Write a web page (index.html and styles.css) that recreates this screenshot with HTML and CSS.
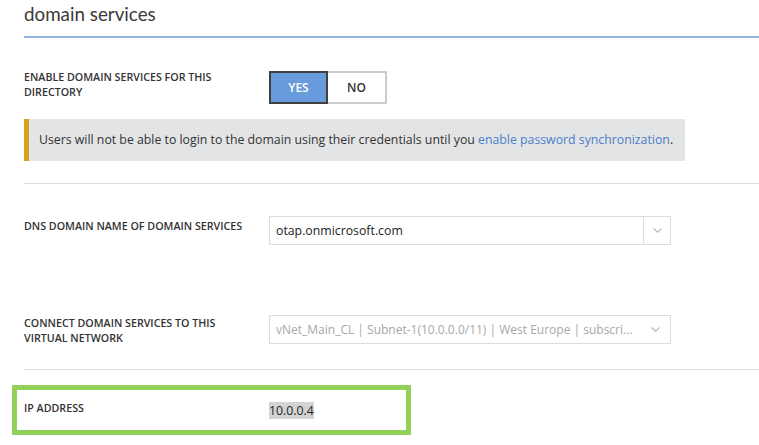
FILE: index.html
```html
<!DOCTYPE html>
<html lang="en">
<head>
<meta charset="utf-8">
<title>domain services</title>
<link rel="stylesheet" href="styles.css">
</head>
<body>
<div class="page">
  <h1 class="title">domain services</h1>
  <div class="rule"></div>

  <div class="row row-toggle">
    <div class="label">ENABLE DOMAIN SERVICES FOR THIS<br>DIRECTORY</div>
    <div class="toggle">
      <span class="opt opt-on">YES</span>
      <span class="opt opt-off">NO</span>
    </div>
  </div>

  <div class="warning">Users will not be able to login to the domain using their credentials until you <a class="link" href="#">enable password synchronization</a>.</div>

  <div class="divider divider-1"></div>

  <div class="row row-dns">
    <div class="label">DNS DOMAIN NAME OF DOMAIN SERVICES</div>
    <div class="combo">
      <span class="combo-text">otap.onmicrosoft.com</span>
      <span class="combo-btn">
        <svg width="9" height="5" viewBox="0 0 9 5"><polyline points="0.5,0.5 4.5,4.2 8.5,0.5" fill="none" stroke="#b8b8b8" stroke-width="1.1"/></svg>
      </span>
    </div>
  </div>

  <div class="row row-vnet">
    <div class="label">CONNECT DOMAIN SERVICES TO THIS<br>VIRTUAL NETWORK</div>
    <div class="select">
      <span class="select-text">vNet_Main_CL | Subnet-1(10.0.0.0/11) | West Europe | subscri...</span>
      <svg class="select-chev" width="9" height="5" viewBox="0 0 9 5"><polyline points="0.5,0.5 4.5,4.2 8.5,0.5" fill="none" stroke="#b8b8b8" stroke-width="1.1"/></svg>
    </div>
  </div>

  <div class="divider divider-2"></div>

  <div class="row row-ip">
    <div class="label">IP ADDRESS</div>
    <div class="ip-value"><span class="hl">10.0.0.4</span></div>
    <div class="callout"></div>
  </div>
</div>
</body>
</html>
```

FILE: styles.css
```css
html, body {
  margin: 0;
  padding: 0;
  background: #ffffff;
}

body {
  font-family: "Open Sans", "Noto Sans", sans-serif;
  color: #333333;
  width: 759px;
  height: 445px;
  overflow: hidden;
}

.page {
  padding-left: 24px;
}

.title {
  margin: 0;
  height: 36px;
  box-sizing: border-box;
  padding-top: 2px;
  font-family: "Lato", "Open Sans", sans-serif;
  font-size: 18.8px;
  line-height: 24px;
  font-weight: 400;
  color: #3a3a3a;
}

.rule {
  height: 2px;
  background: #93b5e1;
}

.row {
  display: flex;
  align-items: flex-start;
}

.label {
  width: 245px;
  flex: none;
  font-size: 10.7px;
  line-height: 15px;
  font-weight: 600;
  color: #333333;
}

.row-toggle {
  margin-top: 33px;
}

.row-toggle .label {
  margin-top: -1px;
}

.toggle {
  display: flex;
}

.opt {
  width: 59px;
  height: 33px;
  box-sizing: border-box;
  display: flex;
  align-items: center;
  justify-content: center;
  font-size: 12px;
  font-weight: 600;
}

.opt-on {
  background: #679bdc;
  color: #ffffff;
  border: 2px solid #404040;
}

.opt-off {
  background: #ffffff;
  color: #333333;
  border: 2px solid #cccccc;
  border-left: none;
}

.warning {
  margin-top: 15px;
  width: 661px;
  height: 42px;
  box-sizing: border-box;
  background: #e3e4e6;
  border-left: 5px solid #dba020;
  padding-left: 10px;
  font-size: 12.3px;
  line-height: 42px;
  color: #333333;
  white-space: nowrap;
}

.link {
  color: #4a7fc9;
  text-decoration: none;
}

.divider {
  height: 1px;
  background: #dcdcdc;
}

.divider-1 {
  margin-top: 22px;
}

.row-dns {
  margin-top: 32px;
}

.row-dns .label {
  padding-top: 3px;
}

.combo {
  width: 402px;
  height: 29px;
  box-sizing: border-box;
  border: 1px solid #dcdcdc;
  display: flex;
  align-items: center;
}

.combo-text {
  flex: 1;
  padding-left: 6px;
  font-size: 12.3px;
  color: #222222;
}

.combo-btn {
  width: 26px;
  height: 100%;
  border-left: 1px solid #dcdcdc;
  display: flex;
  align-items: center;
  justify-content: center;
}

.row-vnet {
  margin-top: 70px;
}

.row-vnet .label {
  padding-top: 1px;
}

.select {
  width: 402px;
  height: 29px;
  box-sizing: border-box;
  border: 1px solid #dcdcdc;
  display: flex;
  align-items: center;
  padding: 0 10px 0 6px;
}

.select-text {
  flex: 1;
  font-size: 12px;
  color: #a8a8a8;
  white-space: nowrap;
  overflow: hidden;
}

.divider-2 {
  margin-top: 23px;
}

.row-ip {
  position: relative;
  margin-top: 20px;
  height: 40px;
  align-items: center;
}

.row-ip .label {
  margin-top: -3px;
}

.ip-value {
  font-size: 12.3px;
  color: #222222;
}

.hl {
  background: #d3d3d3;
}

.callout {
  position: absolute;
  left: -12px;
  top: -5px;
  width: 399px;
  height: 50px;
  box-sizing: border-box;
  border: 5px solid #92d05a;
}
```
